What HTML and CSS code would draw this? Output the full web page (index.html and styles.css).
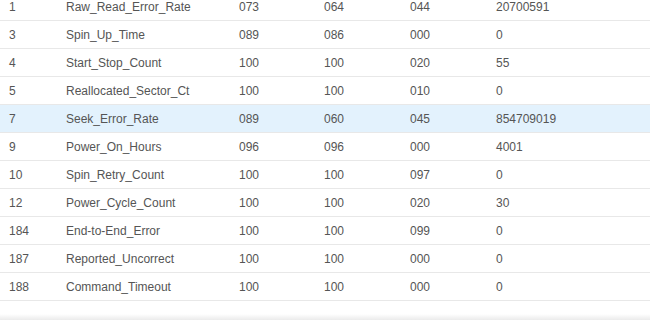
FILE: index.html
```html
<!DOCTYPE html>
<html>
<head>
<meta charset="utf-8">
<link rel="stylesheet" href="styles.css">
</head>
<body>
<div class="panel">
  <table class="smart">
    <colgroup>
      <col class="c-id"><col class="c-name"><col class="c-v1"><col class="c-val"><col class="c-val"><col>
    </colgroup>
    <tbody>
      <tr><td>1</td><td>Raw_Read_Error_Rate</td><td>073</td><td>064</td><td>044</td><td>20700591</td></tr>
      <tr><td>3</td><td>Spin_Up_Time</td><td>089</td><td>086</td><td>000</td><td>0</td></tr>
      <tr><td>4</td><td>Start_Stop_Count</td><td>100</td><td>100</td><td>020</td><td>55</td></tr>
      <tr><td>5</td><td>Reallocated_Sector_Ct</td><td>100</td><td>100</td><td>010</td><td>0</td></tr>
      <tr class="hover"><td>7</td><td>Seek_Error_Rate</td><td>089</td><td>060</td><td>045</td><td>854709019</td></tr>
      <tr><td>9</td><td>Power_On_Hours</td><td>096</td><td>096</td><td>000</td><td>4001</td></tr>
      <tr><td>10</td><td>Spin_Retry_Count</td><td>100</td><td>100</td><td>097</td><td>0</td></tr>
      <tr><td>12</td><td>Power_Cycle_Count</td><td>100</td><td>100</td><td>020</td><td>30</td></tr>
      <tr><td>184</td><td>End-to-End_Error</td><td>100</td><td>100</td><td>099</td><td>0</td></tr>
      <tr><td>187</td><td>Reported_Uncorrect</td><td>100</td><td>100</td><td>000</td><td>0</td></tr>
      <tr><td>188</td><td>Command_Timeout</td><td>100</td><td>100</td><td>000</td><td>0</td></tr>
    </tbody>
  </table>
  <div class="spacer"></div>
  <div class="edge"></div>
</div>
</body>
</html>
```
FILE: styles.css
```css
html, body {
  margin: 0;
  padding: 0;
  background: #fff;
  overflow: hidden;
}
.panel {
  margin-top: -7px;
  width: 650px;
}
.smart {
  width: 650px;
  border-collapse: collapse;
  table-layout: fixed;
  font-family: "Liberation Sans", Arial, sans-serif;
  font-size: 12px;
  color: #555;
}
.c-id { width: 57px; }
.c-name { width: 173px; }
.c-v1 { width: 85px; }
.c-val { width: 86px; }
.smart td {
  height: 27px;
  padding: 0 0 0 9px;
  border-bottom: 1px solid #e8e8e8;
  white-space: nowrap;
  vertical-align: middle;
}
.smart tr.hover td {
  background: #e3f2fd;
}
.spacer {
  height: 13px;
}
.edge {
  height: 6px;
  background: linear-gradient(#fff, #ebebeb);
  border-bottom: 1px solid #dcdcdc;
}
```
